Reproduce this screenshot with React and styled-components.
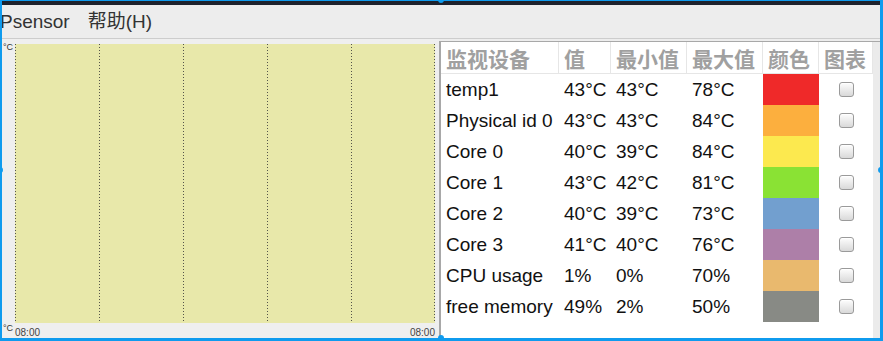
import React from 'react';
import styled, { createGlobalStyle } from 'styled-components';

const GlobalStyle = createGlobalStyle`
  html, body {
    margin: 0;
    padding: 0;
    background: #ffffff;
  }
  body {
    font-family: "Liberation Sans", "Noto Sans CJK SC", sans-serif;
  }
`;

const sensors = [
  { name: 'temp1', value: '43°C', min: '43°C', max: '78°C', color: '#ef2929' },
  { name: 'Physical id 0', value: '43°C', min: '43°C', max: '84°C', color: '#fcaf3e' },
  { name: 'Core 0', value: '40°C', min: '39°C', max: '84°C', color: '#fce94f' },
  { name: 'Core 1', value: '43°C', min: '42°C', max: '81°C', color: '#8ae234' },
  { name: 'Core 2', value: '40°C', min: '39°C', max: '73°C', color: '#729fcf' },
  { name: 'Core 3', value: '41°C', min: '40°C', max: '76°C', color: '#ad7fa8' },
  { name: 'CPU usage', value: '1%', min: '0%', max: '70%', color: '#e9b96e' },
  { name: 'free memory', value: '49%', min: '2%', max: '50%', color: '#888a85' },
];

const BLUE = '#0f9bee';

const Frame = styled.div`
  position: relative;
  width: 883px;
  height: 341px;
  box-sizing: border-box;
  border-top: 1px solid ${BLUE};
  border-left: 2px solid ${BLUE};
  border-right: 3px solid ${BLUE};
  border-bottom: 3px solid ${BLUE};
  display: flex;
  flex-direction: column;
  background: #ededed;
  overflow: hidden;
`;

const TitleBar = styled.div`
  height: 4px;
  background: #1e222d;
  flex: none;
`;

const MenuBar = styled.div`
  height: 33px;
  flex: none;
  display: flex;
  align-items: center;
  gap: 16px;
  background: #ededed;
  border-bottom: 1px solid #cdcdcd;
  font-size: 19px;
  color: #333;
  margin-left: -3px;
`;

const MenuItem = styled.span`
  padding: 0 1px;
  line-height: 33px;
`;

const Body = styled.div`
  flex: 1;
  display: flex;
  min-height: 0;
`;

const GraphPanel = styled.div`
  width: 437px;
  flex: none;
  display: grid;
  grid-template-columns: 13px 420px;
  grid-template-rows: 5px 279px 1fr;
  background: #efefef;
`;

const Unit = styled.span`
  font-size: 9px;
  color: #333;
  line-height: 10px;
  align-self: start;
  padding-left: 1px;
  padding-top: ${(p) => (p.bottom ? '0' : '3px')};
`;

const Chart = styled.div`
  display: flex;
  background: #e8e8aa;
`;

const Section = styled.div`
  flex: 1;
  background-image: repeating-linear-gradient(to bottom, #55554a 0 1px, transparent 1px 3px);
  background-size: 1px 100%;
  background-repeat: no-repeat;
  background-position: left top;
  &:last-child {
    background-image:
      repeating-linear-gradient(to bottom, #55554a 0 1px, transparent 1px 3px),
      repeating-linear-gradient(to bottom, #55554a 0 1px, transparent 1px 3px);
    background-size: 1px 100%, 1px 100%;
    background-position: left top, right top;
  }
`;

const TimeRow = styled.div`
  display: flex;
  justify-content: space-between;
  font-size: 10px;
  color: #444;
  padding-top: 4px;
`;

const TablePanel = styled.div`
  flex: 1;
  display: flex;
  padding-top: 2px;
  background: #ededed;
`;

const Table = styled.div`
  flex: 1;
  background: #ffffff;
  border-top: 1px solid #a8a8a8;
  border-left: 2px solid #a8a8a8;
  display: grid;
  grid-template-columns: 118px 52px 76px 76px 56px 54px 1fr;
  grid-template-rows: 32px;
  grid-auto-rows: 31px;
  align-content: start;
`;

const HeadCell = styled.div`
  font-size: 21px;
  font-weight: bold;
  color: #a0a0a0;
  display: flex;
  align-items: center;
  padding-left: 5px;
  border-right: 1px solid #e6e6e6;
  border-bottom: 1px solid #e6e6e6;
  white-space: nowrap;
  &:last-of-type {
    border-right: none;
  }
`;

const Cell = styled.div`
  font-size: 19px;
  color: #111;
  display: flex;
  align-items: center;
  padding-left: 5px;
  white-space: nowrap;
`;

const Swatch = styled.div`
  background: ${(p) => p.color};
`;

const CheckCell = styled.div`
  display: flex;
  align-items: center;
  justify-content: center;
`;

const Check = styled.span`
  width: 13px;
  height: 13px;
  border: 1px solid #9a9a9a;
  border-radius: 3px;
  background: linear-gradient(#fdfdfd, #d9d9d9);
  box-shadow: inset 0 1px 0 #fff;
`;

const Gutter = styled.div`
  background: #ebebeb;
  grid-column: 7;
  grid-row: 1 / span 20;
`;

const Handle = styled.span`
  position: absolute;
  width: 6px;
  height: 6px;
  border-radius: 50%;
  background: ${BLUE};
  left: ${(p) => p.x}px;
  top: ${(p) => p.y}px;
`;

const App = () => (
  <>
    <GlobalStyle />
    <Frame>
      <TitleBar />
      <MenuBar>
        <MenuItem>Psensor</MenuItem>
        <MenuItem>帮助(H)</MenuItem>
      </MenuBar>
      <Body>
        <GraphPanel>
          <Unit>°C</Unit>
          <div />
          <div />
          <Chart>
            {[0, 1, 2, 3, 4].map((i) => (
              <Section key={i} />
            ))}
          </Chart>
          <Unit bottom>°C</Unit>
          <TimeRow>
            <span>08:00</span>
            <span>08:00</span>
          </TimeRow>
        </GraphPanel>
        <TablePanel>
          <Table>
            <HeadCell>监视设备</HeadCell>
            <HeadCell>值</HeadCell>
            <HeadCell>最小值</HeadCell>
            <HeadCell>最大值</HeadCell>
            <HeadCell>颜色</HeadCell>
            <HeadCell>图表</HeadCell>
            <Gutter />
            {sensors.map((s) => (
              <React.Fragment key={s.name}>
                <Cell>{s.name}</Cell>
                <Cell>{s.value}</Cell>
                <Cell>{s.min}</Cell>
                <Cell>{s.max}</Cell>
                <Swatch color={s.color} />
                <CheckCell>
                  <Check />
                </CheckCell>
              </React.Fragment>
            ))}
          </Table>
        </TablePanel>
      </Body>
      <Handle x={-5} y={166} />
      <Handle x={876} y={166} />
      <Handle x={436} y={334} />
      <Handle x={436} y={-4} />
    </Frame>
  </>
);

export default App;
